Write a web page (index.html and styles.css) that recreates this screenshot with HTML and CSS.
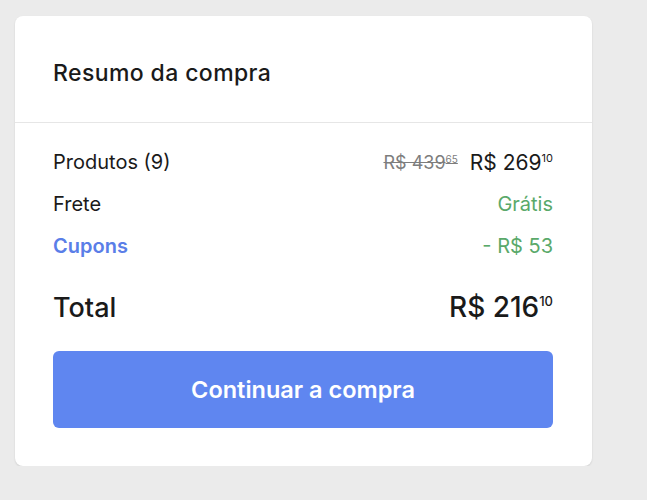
FILE: index.html
```html
<!DOCTYPE html>
<html lang="pt-BR">
<head>
    <meta charset="UTF-8">
    <meta name="viewport" content="width=device-width, initial-scale=1.0">
    <title>Resumo da compra</title>
    <link rel="stylesheet" href="styles.css">
</head>
<body>
    <div class="summary">
        <div class="summary-header">
            <h2>Resumo da compra</h2>
        </div>
        <div class="summary-body">
            <div class="row">
                <span>Produtos (9)</span>
                <span class="prices">
                    <span class="old-price">R$ 439<sup>65</sup></span>
                    <span class="price">R$ 269<sup>10</sup></span>
                </span>
            </div>
            <div class="row">
                <span>Frete</span>
                <span class="green">Grátis</span>
            </div>
            <div class="row">
                <span class="link">Cupons</span>
                <span class="green">- R$ 53</span>
            </div>
            <div class="row total">
                <span>Total</span>
                <span>R$ 216<sup>10</sup></span>
            </div>
            <button class="btn">Continuar a compra</button>
        </div>
    </div>
</body>
</html>
```

FILE: styles.css
```css
body {
    margin: 0;
    padding: 16px 0 0 15px;
    background: #ebebeb;
    font-family: Inter, "Noto Sans", sans-serif;
    color: #1a1a1a;
}

.summary {
    width: 577px;
    background: white;
    border-radius: 8px;
    box-shadow: 0 1px 2px rgba(0, 0, 0, 0.12);
}

.summary-header {
    height: 98px;
    padding: 8px 38px 0 38px;
    display: flex;
    align-items: center;
    border-bottom: 1px solid #e6e6e6;
}

.summary-header h2 {
    margin: 0;
    font-size: 23px;
    font-weight: 500;
    letter-spacing: 0.4px;
}

.summary-body {
    padding: 27px 39px 38px 38px;
}

.row {
    display: flex;
    justify-content: space-between;
    align-items: center;
    height: 24px;
    margin-bottom: 18px;
    font-size: 20px;
    font-weight: 400;
}

.row sup {
    font-size: 11px;
    vertical-align: 8px;
    line-height: 0;
}

.prices {
    display: flex;
    gap: 12px;
    align-items: center;
}

.price {
    font-size: 21px;
}

.old-price {
    color: #7d7d7d;
    font-size: 18px;
    text-decoration: line-through;
}

.old-price sup {
    font-size: 10px;
    vertical-align: 6px;
}

.green {
    color: #5aa96a;
}

.link {
    color: #5a7ee8;
    font-weight: 600;
}

.row.total {
    height: 30px;
    margin-top: 34px;
    margin-bottom: 29px;
    font-size: 27px;
    font-weight: 500;
}

.row.total span:last-child {
    font-size: 28px;
}

.row.total sup {
    font-size: 13px;
    vertical-align: 11px;
}

.btn {
    display: block;
    width: 100%;
    height: 77px;
    border: none;
    border-radius: 6px;
    background: #5f86f0;
    color: white;
    font-family: inherit;
    font-size: 23.5px;
    font-weight: 600;
    cursor: pointer;
}
```
